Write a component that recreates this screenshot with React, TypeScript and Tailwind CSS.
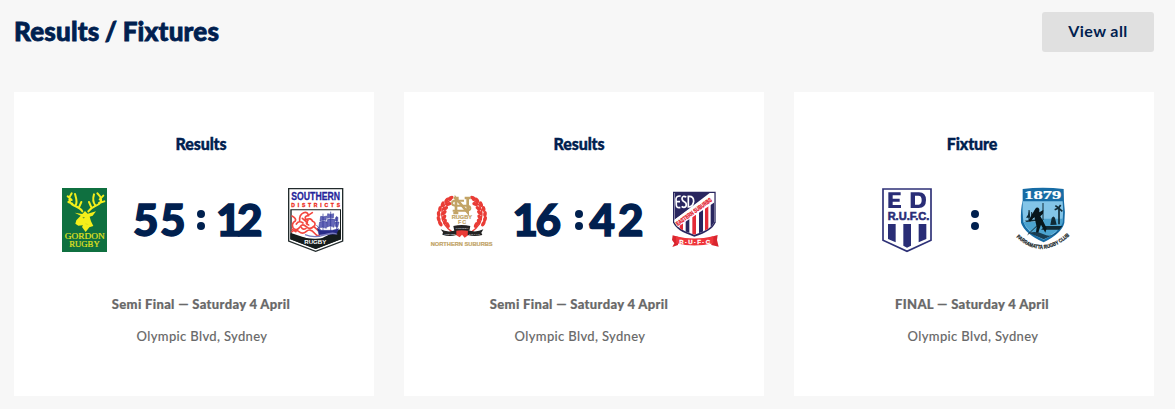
import type { ReactNode } from "react";

const serif = "Liberation Serif, serif";
const sans = "Liberation Sans, sans-serif";
const narrow = "Liberation Sans Narrow, Liberation Sans, sans-serif";

function GordonLogo() {
  return (
    <svg className="overflow-visible" width="45" height="64" viewBox="21 24 135 192" role="img">
      <rect x="21" y="24" width="135" height="192" fill="#0f7040" />
      <g fill="none" stroke="#f4ee1a" strokeWidth="6" strokeLinecap="round" strokeLinejoin="round">
        <path d="M82 94C76 82 62 80 51 73C41 66 40 53 50 40M52 71L40 66M50 60L38 49M62 76C68 66 64 56 60 42M72 82L79 66" />
        <path d="M100 94C108 82 120 80 132 72C142 64 140 52 127 40M132 69L148 64M134 58L145 47M121 76C113 66 113 56 117 43M109 82L102 66" />
      </g>
      <path
        d="M59 98L82 102L90 93L98 101L123 94L113 107L104 110L108 124L115 138L103 142L92 156L81 141L84 136L70 137L61 131L64 121L77 107Z"
        fill="#f4ee1a"
      />
      <path d="M83 111l7 2-5 2zM91 131l9 3" fill="#0f7040" stroke="#a8b928" strokeWidth="1" />
      <g fill="#e7e51d" stroke="#e7e51d" strokeWidth=".5" fontFamily={serif} fontSize="25">
        <text x="29" y="178" textLength="120" lengthAdjust="spacingAndGlyphs">GORDON</text>
        <text x="43" y="200" textLength="91" lengthAdjust="spacingAndGlyphs">RUGBY</text>
      </g>
    </svg>
  );
}

function SouthernLogo() {
  return (
    <svg className="overflow-visible" width="56" height="64" viewBox="24 24 168 192" role="img">
      <path d="M26 26H188V183L107 214L26 183Z" fill="#fff" stroke="#222b2c" strokeWidth="4" />
      <path d="M31 88H183V178L107 207L31 178Z" fill="#151c1c" />
      <path d="M35 91H180V148L107 184L35 160Z" fill="#fff" />
      <text x="34" y="61" fill="#24249a" stroke="#24249a" strokeWidth=".8" fontFamily={narrow} fontWeight="700" fontSize="31" textLength="146" lengthAdjust="spacingAndGlyphs">SOUTHERN</text>
      <text x="34" y="82" fill="#ed3026" stroke="#ed3026" strokeWidth="1" fontFamily={sans} fontWeight="700" fontSize="15" textLength="146">DISTRICTS</text>
      <g fill="none" stroke="#f3473f" strokeWidth="5" strokeLinecap="round">
        <path d="M36 108Q50 115 46 123Q33 130 39 143Q49 155 60 141Q67 129 79 140Q90 151 101 139L114 151" />
        <path d="M59 122Q57 104 71 98Q83 94 85 107Q72 108 77 119Q93 112 98 124Q108 128 104 137M67 115L82 128M49 132Q57 120 69 129M84 121Q73 131 86 135M36 155Q46 146 57 155T79 154T103 159T119 163M64 142Q69 151 78 145M88 104L97 98M36 148L48 155" />
      </g>
      <g fill="#6567b9" stroke="#292f91" strokeWidth="1.5">
        <path d="M122 109Q131 112 140 108L138 121Q129 119 120 123ZM119 126Q130 122 141 126L139 145Q127 138 116 145ZM143 101Q152 105 161 101L160 114Q151 111 142 115ZM142 119Q153 114 165 119L162 142Q151 134 141 141ZM166 113L174 112L173 124L166 122ZM165 127L177 126L173 142L166 139Z" />
        <path d="M112 144L122 151H157L176 146L169 162L117 164Z" fill="#282b88" />
      </g>
      <path d="M129 101V151M152 95V153M170 108V150M109 135L123 151" stroke="#292f91" strokeWidth="2" />
      <path d="M75 164Q103 175 132 165T173 164" fill="none" stroke="#7778bb" strokeWidth="4" />
      <path d="M31 160Q67 177 107 176T183 158V178L107 207L31 178Z" fill="#151c1c" />
      <text x="73" y="191" fill="#fff" fontFamily={sans} fontWeight="700" fontSize="15" textLength="66" lengthAdjust="spacingAndGlyphs">RUGBY</text>
    </svg>
  );
}

const wreath = [
  [77, 54, 65], [65, 61, 35], [53, 73, 20], [45, 87, 5], [41, 102, -5], [41, 117, -15], [46, 131, -30],
  [70, 72, 75], [61, 85, 60], [57, 98, 45], [57, 112, 30], [60, 125, 10], [68, 135, -25],
];

function WreathSide() {
  return (
    <g fill="#e93c36">
      <path d="M80 58C40 78 39 128 84 158" fill="none" stroke="#e93c36" strokeWidth="4" />
      {wreath.map(([x, y, r]) => (
        <ellipse key={`${x}-${y}`} cx={x} cy={y} rx="5.4" ry="9.2" transform={`rotate(${r} ${x} ${y})`} />
      ))}
    </g>
  );
}

function NorthernLogo() {
  return (
    <svg className="overflow-visible" width="64" height="64" viewBox="15 24 192 192" role="img">
      <WreathSide />
      <g transform="matrix(-1 0 0 1 221 0)"><WreathSide /></g>
      <g fill="none" stroke="#c2a365">
        <path d="M93 99V55L128 97V55M86 54H101M119 54H137M85 99H100" strokeWidth="8" />
        <path d="M117 62H89Q81 62 81 70Q81 77 91 77H126Q136 77 136 85Q136 92 124 92H83" strokeWidth="6" />
      </g>
      <g fill="#c2a365" stroke="#c2a365" strokeWidth=".6" fontFamily={sans} fontWeight="700">
        <text x="80" y="116" fontSize="16" textLength="61" lengthAdjust="spacingAndGlyphs">RUGBY</text>
        <text x="99" y="132" fontSize="16" textLength="24">FC</text>
        <text x="17" y="198" fontSize="17" textLength="186" lengthAdjust="spacingAndGlyphs">NORTHERN SUBURBS</text>
      </g>
      <path d="M82 158L104 172L111 164L119 173L140 158L125 149H96Z" fill="#e93c36" />
      <path d="M85 138Q110 132 136 138L133 153Q110 148 88 153ZM47 148Q66 159 94 151V165Q74 172 52 164L54 157ZM129 151Q154 159 175 148L169 158L172 165Q149 171 128 165Z" fill="#232323" />
      <g fill="#ddd" fontFamily={sans} fontSize="7" fontWeight="700">
        <text x="92" y="148" textLength="38">FORTUNA</text>
        <text x="58" y="164" textLength="34">AUDACES</text>
        <text x="132" y="164" textLength="32">JUVAT</text>
      </g>
    </svg>
  );
}

function EasternLogo() {
  return (
    <svg className="overflow-visible" width="47" height="64" viewBox="36 24 141 192" role="img">
      <defs>
        <clipPath id="east-shield"><path d="M43 39H163V126Q153 150 103 164Q52 149 43 126Z" /></clipPath>
      </defs>
      <path d="M39 35H167V127Q157 154 103 170Q48 153 39 127Z" fill="#29265f" />
      <path d="M43 39H163V126Q153 150 103 164Q52 149 43 126Z" fill="#fff" />
      <g clipPath="url(#east-shield)">
        <path d="M43 39H149L43 120Z" fill="#29265f" />
        <rect x="46" y="125" width="8" height="50" fill="#29265f" />
        <rect x="59" y="118" width="10" height="55" fill="#e42b37" />
        <rect x="77" y="107" width="11" height="68" fill="#29265f" />
        <rect x="97" y="95" width="11" height="75" fill="#e42b37" />
        <rect x="117" y="80" width="12" height="88" fill="#29265f" />
        <rect x="135" y="68" width="10" height="90" fill="#e42b37" />
        <rect x="152" y="53" width="10" height="100" fill="#29265f" />
        <path d="M36 124L161 35L172 61L43 148Z" fill="#fff" />
      </g>
      <text x="53" y="138" transform="rotate(-36 53 138)" fill="#e42b37" stroke="#e42b37" strokeWidth="1.2" fontFamily={narrow} fontWeight="700" fontSize="18" textLength="129" lengthAdjust="spacingAndGlyphs">EASTERN SUBURBS</text>
      <g fill="none" stroke="#fff" strokeWidth="5">
        <path d="M62 48Q49 47 48 57L49 75Q49 85 61 82M49 65H60" />
        <path d="M79 51Q67 46 66 55Q66 63 74 66Q81 70 78 79Q72 85 65 79" />
        <path d="M85 49H88Q101 49 101 64Q99 81 85 81Z" />
      </g>
      <path d="M38 166L54 170V195L37 201L43 190L36 180ZM154 170L173 165L171 180L176 200L154 195Z" fill="#d9252e" />
      <path d="M48 169Q102 182 160 169V190Q102 203 49 190Z" fill="#ef353b" />
      <text x="58" y="193" fill="#fff" stroke="#fff" strokeWidth=".8" fontFamily={sans} fontWeight="700" fontSize="18" textLength="92">R·U·F·C</text>
    </svg>
  );
}

function EasternDistrictLogo() {
  return (
    <svg className="overflow-visible" width="50" height="64" viewBox="36 24 150 192" role="img">
      <path d="M39 27H183V181L111 214L39 181Z" fill="#fff" stroke="#2e3177" strokeWidth="5" />
      <path d="M55 37H92V46H68V56H89V65H68V75H93V84H55Z" fill="#292d76" />
      <path fillRule="evenodd" d="M122 37H147Q168 38 168 60Q168 84 146 84H122ZM135 47V74H146Q155 73 155 60Q155 47 145 47Z" fill="#292d76" />
      <text x="53" y="121" fill="#292d76" stroke="#292d76" strokeWidth="1.8" fontFamily={narrow} fontWeight="700" fontSize="35" textLength="125" lengthAdjust="spacingAndGlyphs">R.U.F.C.</text>
      <path d="M54 132H77V187L54 177ZM100 132H123V197L111 203L100 197ZM146 132H169V177L146 187Z" fill="#292d76" />
    </svg>
  );
}

function ParramattaLogo() {
  return (
    <svg className="overflow-visible" width="54" height="64" viewBox="21 24 162 192" role="img">
      <defs><path id="club-arc" d="M22 171Q96 243 181 168" /></defs>
      <path d="M41 27Q101 19 164 27L165 65Q170 96 166 129Q158 160 104 187Q47 161 36 128Q34 87 41 62Z" fill="#176ca5" />
      <path d="M41 64H161Q164 99 160 126Q152 157 104 179Q53 158 43 126Q39 92 41 64Z" fill="#83c5e8" />
      <path d="M43 126H90V116H161V129Q151 154 104 177Q58 156 45 129Z" fill="#4ca3cf" />
      <path d="M47 122L83 118L81 123L53 126ZM57 104L61 90L64 113H51ZM69 98L76 113H68ZM108 138H160L151 149H96ZM124 135L128 114Q134 105 138 114L143 134Z" fill="#102a36" />
      <path d="M102 69V120L56 164M60 90V121M68 96V121" fill="none" stroke="#102a36" strokeWidth="3" />
      <path d="M79 86Q85 79 91 87L91 97L103 90L102 101L94 109L101 121L113 145L109 158L96 134L90 151L86 168L80 165L83 140L76 111L63 125L59 121L71 100Z" fill="#07161c" />
      <path d="M150 133V84M149 84L137 89M149 84L160 94M149 84L155 75M149 84L139 77" stroke="#102a36" strokeWidth="5" />
      <path d="M60 159Q80 151 104 163T149 151L140 161L104 178L68 162Z" fill="#183d52" />
      <text fill="#20282b" stroke="#20282b" strokeWidth=".8" fontFamily={sans} fontWeight="700" fontSize="16"><textPath href="#club-arc" textLength="181" lengthAdjust="spacingAndGlyphs">PARRAMATTA RUGBY CLUB</textPath></text>
      <text x="46" y="57" fill="#fff" stroke="#fff" strokeWidth=".7" fontFamily={serif} fontWeight="700" fontSize="35" textLength="111" lengthAdjust="spacingAndGlyphs">1879</text>
    </svg>
  );
}

function Colon() {
  return (
    <div className="flex w-2 flex-col gap-1">
      <span className="size-2 rounded-full bg-[#00204f]" />
      <span className="size-2 rounded-full bg-[#00204f]" />
    </div>
  );
}

function Score({ children, className }: { children: ReactNode; className: string }) {
  return <span className={`pb-px text-left text-[44px] leading-[63px] font-black whitespace-nowrap [-webkit-text-stroke:1.4px_#00204f] ${className}`}>{children}</span>;
}

type MatchCardProps = { title: string; stage: string; className?: string; rowClassName: string; children: ReactNode };

function MatchCard({ title, stage, className = "", rowClassName, children }: MatchCardProps) {
  return (
    <article className={`flex h-[304px] w-[360px] flex-col bg-white pt-10 text-center ${className}`}>
      <h3 className="text-[16px] leading-6 font-black tracking-[-0.1px] [-webkit-text-stroke:0.4px_#00204f]">{title}</h3>
      <div className={`mt-8 flex h-16 items-center justify-center ${rowClassName}`}>{children}</div>
      <p className="mt-[42px] text-[13px] leading-5 font-black tracking-[0.33px] text-[#696969] [-webkit-text-stroke:0.2px_#696969]">{stage}</p>
      <p className="mt-3 pl-0.5 text-[13px] leading-5 font-medium tracking-[0.35px] text-[#696969] [-webkit-text-stroke:0.1px_#696969]">Olympic Blvd, Sydney</p>
    </article>
  );
}

export default function App() {
  return (
    <main className="h-[409px] w-[1175px] overflow-hidden bg-[#f7f7f7] pt-3 pr-[21px] pl-[14px] font-['Lato',sans-serif] text-[#00204f]">
      <header className="flex h-10 items-center justify-between">
        <h2 className="pb-0.5 text-[26px] leading-[38px] font-black tracking-[0.2px] [word-spacing:-1px] [-webkit-text-stroke:0.8px_#00204f]">Results / Fixtures</h2>
        <button className="h-10 w-28 rounded-[3px] bg-[#e0e0e0] pb-0.5 text-[16px] font-bold tracking-[0.4px]">View all</button>
      </header>
      <section className="mt-10 flex gap-[30px]">
        <MatchCard title="Results" stage="Semi Final — Saturday 4 April" className="pl-[14px]" rowClassName="pl-1">
          <GordonLogo />
          <Score className="ml-[26px] w-[54px] tracking-[1.5px]">55</Score>
          <div className="ml-[10px]"><Colon /></div>
          <Score className="mr-[26px] ml-[11px] w-[46px] tracking-[-4.5px]">12</Score>
          <SouthernLogo />
        </MatchCard>
        <MatchCard title="Results" stage="Semi Final — Saturday 4 April" className="pr-[10px]" rowClassName="pr-[10px]">
          <NorthernLogo />
          <Score className="ml-[19px] w-[49px] tracking-[-2.5px]">16</Score>
          <div className="ml-[13px]"><Colon /></div>
          <Score className="mr-[25px] ml-[7px] w-[57px] tracking-[3px]">42</Score>
          <EasternLogo />
        </MatchCard>
        <MatchCard title="Fixture" stage="FINAL — Saturday 4 April" className="pr-1" rowClassName="pl-2">
          <EasternDistrictLogo />
          <div className="mr-[37px] ml-[39px]"><Colon /></div>
          <ParramattaLogo />
        </MatchCard>
      </section>
    </main>
  );
}
